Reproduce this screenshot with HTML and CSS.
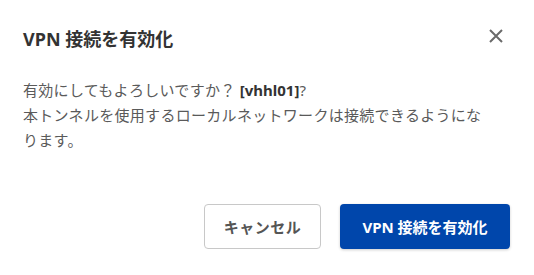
FILE: index.html
```html
<!DOCTYPE html>
<html lang="ja">
<head>
    <meta charset="UTF-8">
    <meta name="viewport" content="width=device-width, initial-scale=1.0">
    <title>VPN 接続を有効化</title>
    <link rel="stylesheet" href="styles.css">
</head>
<body>
    <div class="dialog">
        <div class="dialog-header">
            <h2 class="dialog-title">VPN 接続を有効化</h2>
            <button class="close-button" aria-label="閉じる">
                <svg width="14" height="14" viewBox="0 0 14 14">
                    <path d="M1 1 L13 13 M13 1 L1 13" stroke="#6a6a6a" stroke-width="2" fill="none"/>
                </svg>
            </button>
        </div>
        <div class="dialog-body">
            <p>有効にしてもよろしいですか？ <b>[vhhl01]</b>?<br>本トンネルを使用するローカルネットワークは接続できるようになります。</p>
        </div>
        <div class="dialog-footer">
            <button class="btn btn-cancel">キャンセル</button>
            <button class="btn btn-primary">VPN 接続を有効化</button>
        </div>
    </div>
</body>
</html>
```

FILE: styles.css
```css
body {
    font-family: "Noto Sans", "Noto Sans CJK JP", sans-serif;
    margin: 0;
    background-color: white;
}
.dialog {
    height: 275px;
    box-sizing: border-box;
    padding: 26px 24px 26px 23px;
    display: flex;
    flex-direction: column;
}
.dialog-header {
    display: flex;
    justify-content: space-between;
    align-items: center;
    height: 26px;
}
.dialog-title {
    margin: 0;
    font-size: 18px;
    font-weight: bold;
    color: #333;
    line-height: 26px;
}
.close-button {
    background: none;
    border: none;
    padding: 0;
    margin: -6px 7px 0 0;
    width: 14px;
    height: 14px;
    cursor: pointer;
    display: flex;
}
.dialog-body p {
    margin: 26px 0 0;
    width: 470px;
    font-size: 15px;
    line-height: 25px;
    letter-spacing: 0.3px;
    color: #5a5a5a;
}
.dialog-body b {
    color: #333;
    letter-spacing: 0;
}
.dialog-footer {
    margin-top: auto;
    display: flex;
    justify-content: flex-end;
    gap: 19px;
}
.btn {
    font-family: inherit;
    font-size: 15px;
    font-weight: bold;
    height: 45px;
    border-radius: 4px;
    cursor: pointer;
}
.btn-cancel {
    width: 117px;
    background-color: white;
    color: #555;
    border: 1px solid #c8c8c8;
    letter-spacing: 0.5px;
}
.btn-primary {
    width: 170px;
    background-color: #0046ab;
    color: white;
    border: none;
    box-shadow: 0 1px 3px rgba(0, 0, 0, 0.2);
}
```
